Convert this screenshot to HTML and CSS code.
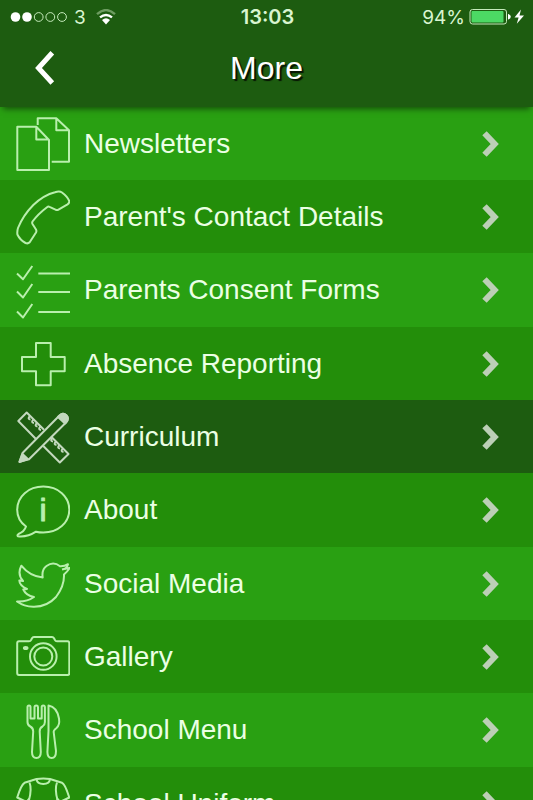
FILE: index.html
```html
<!DOCTYPE html>
<html lang="en">
<head>
  <meta charset="UTF-8">
  <meta name="viewport" content="width=device-width, initial-scale=1">
  <title>More</title>
  <link rel="stylesheet" href="styles.css">
</head>
<body>
  <header class="header">
    <!-- Phone status bar -->
    <div class="status">
      <div class="status-left">
        <svg class="signal" width="58" height="12" viewBox="0 0 58 12" aria-hidden="true">
          <circle class="on" cx="5.5" cy="6" r="4.8"/>
          <circle class="on" cx="17" cy="6" r="4.8"/>
          <circle cx="28.7" cy="6" r="4.4"/>
          <circle cx="40.3" cy="6" r="4.4"/>
          <circle cx="52" cy="6" r="4.4"/>
        </svg>
        <span>3</span>
        <svg class="wifi" width="20" height="16" viewBox="0 0 20 16" aria-hidden="true">
          <path class="faint" d="M1 5.2Q10-3 19 5.2"/>
          <path d="M4 8.4Q10 3.4 16 8.4"/>
          <path class="fill" d="M6 11Q10 7.6 14 11L10 15.4Z"/>
        </svg>
      </div>
      <span class="clock">13:03</span>
      <div class="status-right">
        <span>94%</span>
        <svg width="56" height="18" viewBox="0 0 56 18" aria-hidden="true">
          <rect class="battery" x="1" y="1.5" width="36.5" height="14.5" rx="2.5"/>
          <rect class="charge" x="2.5" y="3" width="32" height="11.5" rx="1"/>
          <path class="fill" d="M39 6Q41.800 6.500 41.800 8.800T39 11.500Z"/>
          <path class="fill" d="M52 1.500L45.500 9.600H49.600L47.800 15.800L55 7.400H50.500Z"/>
        </svg>
      </div>
    </div>

    <nav class="nav">
      <button class="back" type="button" aria-label="Back">
        <svg width="22" height="36" viewBox="0 0 22 36" aria-hidden="true">
          <path d="M18.300 2.800L4.500 18L18.300 33"/>
        </svg>
      </button>
      <h1>More</h1>
    </nav>
  </header>

  <ul class="menu">
    <li>
      <a href="#newsletters">
        <svg class="icon" viewBox="0 0 54 57" aria-hidden="true">
          <path d="M1.300 11.700H20.300L33 25V55H1.300ZM20.300 11.700V24.500H33"/>
          <path d="M21.700 10V3.300H40.300L53 15.300V46.700H35.700M40.300 3.300V15.300H53"/>
        </svg>
        <span>Newsletters</span>
        <svg class="chevron" viewBox="0 0 18 28" aria-hidden="true"><path d="M2.500 3.200L12.700 14L2.500 24.800"/></svg>
      </a>
    </li>
    <li>
      <a href="#contact">
        <svg class="icon" viewBox="0 0 54 57" aria-hidden="true">
          <path d="M39 4.300Q43.500 2.800 46 4.500Q51.500 8.500 53.200 13Q53.500 15 51.500 16.300L42.500 21.600Q41 22.500 39.500 21.600L33.500 18.800Q32.300 18.200 31 19.200Q22 26 16.500 33.500Q15.800 34.800 16.500 36L20 41.500Q20.800 43 20 44.500L13.700 54.300Q12 56 9.500 55Q4 52 1.400 46.500Q1 43 2 40Q7 27.500 17.300 17Q28 7 39 4.300Z"/>
        </svg>
        <span>Parent's Contact Details</span>
        <svg class="chevron" viewBox="0 0 18 28" aria-hidden="true"><path d="M2.500 3.200L12.700 14L2.500 24.800"/></svg>
      </a>
    </li>
    <li>
      <a href="#consent">
        <svg class="icon" viewBox="0 0 54 57" aria-hidden="true">
          <path d="M1 11.500L7 17.300L16.300 4M1 29.500L7 35.500L16.300 22M1 49.500L7 55.500L16.300 42"/>
          <path d="M22.300 11.500H54M22.300 30H54M22.300 50H54"/>
        </svg>
        <span>Parents Consent Forms</span>
        <svg class="chevron" viewBox="0 0 18 28" aria-hidden="true"><path d="M2.500 3.200L12.700 14L2.500 24.800"/></svg>
      </a>
    </li>
    <li>
      <a href="#absence">
        <svg class="icon" viewBox="0 0 54 57" aria-hidden="true">
          <path d="M20 8H34.700V22H48.700V36.300H34.700V50.300H20V36.300H6V22H20Z"/>
        </svg>
        <span>Absence Reporting</span>
        <svg class="chevron" viewBox="0 0 18 28" aria-hidden="true"><path d="M2.500 3.200L12.700 14L2.500 24.800"/></svg>
      </a>
    </li>
    <li class="active">
      <a href="#curriculum">
        <svg class="icon" viewBox="0 0 54 57" aria-hidden="true">
          <!-- ruler, behind the pencil -->
          <path d="M19.700 30.700L2.300 13L10.700 4.500L28 21.800M27.300 38L43.800 54.500L52.500 46L35 28.500"/>
          <path d="M14 8Q11 11 14.500 11.500M17.500 11.500Q14.500 14.500 18 15M21 15Q18 18 21.500 18.500M24.500 18.500Q21.500 21.500 25 22M36.500 30Q33.500 33 37 33.500M40 33.500Q37 36.500 40.500 37M43.500 37Q40.500 40 44 40.500M47 40.500Q44 43.500 47.500 44"/>
          <!-- pencil -->
          <path d="M6.500 45L43 8Q47 4 50.300 7.300T50 14.500L13 51.200L3.500 53.700Z"/>
          <path class="solid" d="M6.500 46L11.800 51L3.500 54ZM42 9L43 8Q47 4 50.300 7.300T50 14.500L49 15.500Z"/>
        </svg>
        <span>Curriculum</span>
        <svg class="chevron" viewBox="0 0 18 28" aria-hidden="true"><path d="M2.500 3.200L12.700 14L2.500 24.800"/></svg>
      </a>
    </li>
    <li>
      <a href="#about">
        <svg class="icon" viewBox="0 0 54 57" aria-hidden="true">
          <path d="M10 44.500C4.500 40.500 1.200 34.500 1.200 27.700C1.200 14.500 12.500 4.500 27.300 4.500S53.300 14.500 53.300 27.700S42 50.500 27.300 50.500Q23 50.500 20 49.700Q11 55.500 1.800 54.300Q1 53 2.500 52Q8.500 49.500 10 44.500Z"/>
          <text x="27" y="39" text-anchor="middle">i</text>
        </svg>
        <span>About</span>
        <svg class="chevron" viewBox="0 0 18 28" aria-hidden="true"><path d="M2.500 3.200L12.700 14L2.500 24.800"/></svg>
      </a>
    </li>
    <li>
      <a href="#social">
        <svg class="icon" viewBox="0 0 54 57" aria-hidden="true">
          <path d="M5.300 10.700Q14 21.500 26.700 22.500Q25.500 14.500 30.500 11Q37.500 6 44 11.300Q48.500 11.500 52 9.200Q51.500 11.500 49.500 13.500L53.700 13Q51.500 16.500 48 19.500Q48.500 31 40 42Q31 52 17.300 51.700Q8 51.500 1 46.500Q11 47 18 42Q10 40.500 7.300 34.500L11 34Q3.500 30.500 3.300 25.500L7 26Q1 19 5.300 10.700Z"/>
          <path d="M46 14.500L50 13.500"/>
        </svg>
        <span>Social Media</span>
        <svg class="chevron" viewBox="0 0 18 28" aria-hidden="true"><path d="M2.500 3.200L12.700 14L2.500 24.800"/></svg>
      </a>
    </li>
    <li>
      <a href="#gallery">
        <svg class="icon" viewBox="0 0 54 57" aria-hidden="true">
          <path d="M3 13.300H13Q14.500 13.300 15.200 11.800L16 10.300Q16.500 9 18 9H36Q37.300 9 38 10.300L38.800 11.800Q39.500 13.300 41 13.300H51.500Q53.300 13.300 53.300 15.300V45Q53.300 47 51.500 47H3Q1.200 47 1.200 45V15.300Q1.200 13.300 3 13.300Z"/>
          <circle cx="27.300" cy="28.500" r="13.300"/>
          <circle cx="27.300" cy="28.500" r="9"/>
          <ellipse class="solid" cx="9.700" cy="20" rx="1.800" ry="1"/>
        </svg>
        <span>Gallery</span>
        <svg class="chevron" viewBox="0 0 18 28" aria-hidden="true"><path d="M2.500 3.200L12.700 14L2.500 24.800"/></svg>
      </a>
    </li>
    <li>
      <a href="#menu">
        <svg class="icon" viewBox="0 0 54 57" aria-hidden="true">
          <path d="M11.500 5Q11.500 3.500 13 3.500T14.500 5V16.500H18.500V5Q18.500 3.500 20.200 3.500T22 5V16.500H25.700V5Q25.700 3.500 27.200 3.500T28.900 5V20Q28.900 23 26.500 24.500Q23.500 26 23.700 29.500L24.800 50Q24.800 56 20.400 56T16 50L17.200 29.500Q17.200 26 14.300 24.500Q11.500 23 11.500 20Z"/>
          <path d="M32.500 3.500Q41 5 43 16.500Q44 23 40.500 26Q37 28.500 37.800 31L40 49Q40 56 35.700 56T31.400 50L32.500 29Z"/>
        </svg>
        <span>School Menu</span>
        <svg class="chevron" viewBox="0 0 18 28" aria-hidden="true"><path d="M2.500 3.200L12.700 14L2.500 24.800"/></svg>
      </a>
    </li>
    <li>
      <a href="#uniform">
        <svg class="icon" viewBox="0 0 54 57" aria-hidden="true">
          <path d="M20.500 4Q27.300 3 34 4L46 7.800Q49 9 53.300 22.500L44 27L41.500 24V55H13V24L10.500 27L1.200 22.500Q5 10 8.500 7.800Z"/>
          <path d="M20.500 4Q21 9 27.300 9T34 4M13.500 7.500Q16 14 13 25M41 7.500Q38.500 14 41.500 25"/>
        </svg>
        <span>School Uniform</span>
        <svg class="chevron" viewBox="0 0 18 28" aria-hidden="true"><path d="M2.500 3.200L12.700 14L2.500 24.800"/></svg>
      </a>
    </li>
  </ul>
</body>
</html>
```
FILE: styles.css
```css
:root {
  --header: #1d5c10;
  --row: #29a012;
  --row-alt: #238e0a;
  --text: #ebffe4;
  --icon: #b9efad;
  --chevron: #bccfb6;
}

html {
  scrollbar-width: none;
}

body {
  margin: 0;
  font-family: "Liberation Sans", Arial, sans-serif;
  background: var(--row-alt);
  color: var(--text);
}

.header {
  position: sticky;
  top: 0;
  z-index: 1;
  padding-bottom: 5px;
  background: var(--header);
  box-shadow: 0 5px 6px -3px rgba(0, 0, 0, 0.5);
}

.status {
  display: grid;
  grid-template-columns: 1fr auto 1fr;
  align-items: center;
  height: 34px;
  padding: 0 8px 0 10px;
  font-family: Inter, sans-serif;
  font-size: 19px;
  color: #d9f5d0;
}

.status-left,
.status-right {
  display: flex;
  align-items: center;
  gap: 6px;
}

.status-right {
  justify-content: flex-end;
  gap: 4px;
}

.clock {
  font-size: 20px;
  font-weight: 600;
}

.signal circle {
  fill: none;
  stroke: #c5eabb;
  stroke-width: 1;
}

.signal .on {
  fill: #fff;
  stroke: none;
}

.wifi {
  margin-left: 4px;
  fill: none;
  stroke: #fff;
  stroke-width: 2.4;
}

.wifi .faint {
  stroke: #6d9c60;
}

.fill {
  fill: #fff;
  stroke: none;
}

.battery {
  fill: none;
  stroke: #c5eabb;
}

.charge {
  fill: #4cd964;
}

.nav {
  display: grid;
  grid-template-columns: 90px 1fr 90px;
  align-items: center;
  height: 68px;
}

.nav h1 {
  margin: 0;
  text-align: center;
  font-size: 32px;
  font-weight: 400;
  color: #fff;
  text-shadow: 2px 2px 1px rgba(0, 0, 0, 0.8);
}

.back {
  display: flex;
  padding: 0 0 0 34px;
  border: none;
  background: none;
  cursor: pointer;
}

.back path {
  fill: none;
  stroke: #fff;
  stroke-width: 5;
}

.menu {
  margin: 0;
  padding: 0;
  list-style: none;
}

.menu li {
  height: 73px;
  background: var(--row);
}

.menu li:nth-child(3n) {
  height: 74px;
}

.menu li:nth-child(even) {
  background: var(--row-alt);
}

.menu li.active {
  background: var(--header);
}

.menu a {
  display: flex;
  align-items: center;
  gap: 14px;
  height: 100%;
  padding: 0 33px 0 16px;
  font-size: 28px;
  color: inherit;
  text-decoration: none;
}

.menu span {
  flex: 1;
}

.icon {
  width: 54px;
  height: 57px;
  fill: none;
  stroke: var(--icon);
  stroke-width: 2;
  stroke-linejoin: round;
}

.icon .solid,
.icon text {
  fill: var(--icon);
}

.icon text {
  stroke-width: 1;
  font-size: 32px;
}

.active .icon {
  --icon: #c3d8be;
}

.chevron {
  width: 18px;
  height: 28px;
  fill: none;
  stroke: var(--chevron);
  stroke-width: 6;
}
```
